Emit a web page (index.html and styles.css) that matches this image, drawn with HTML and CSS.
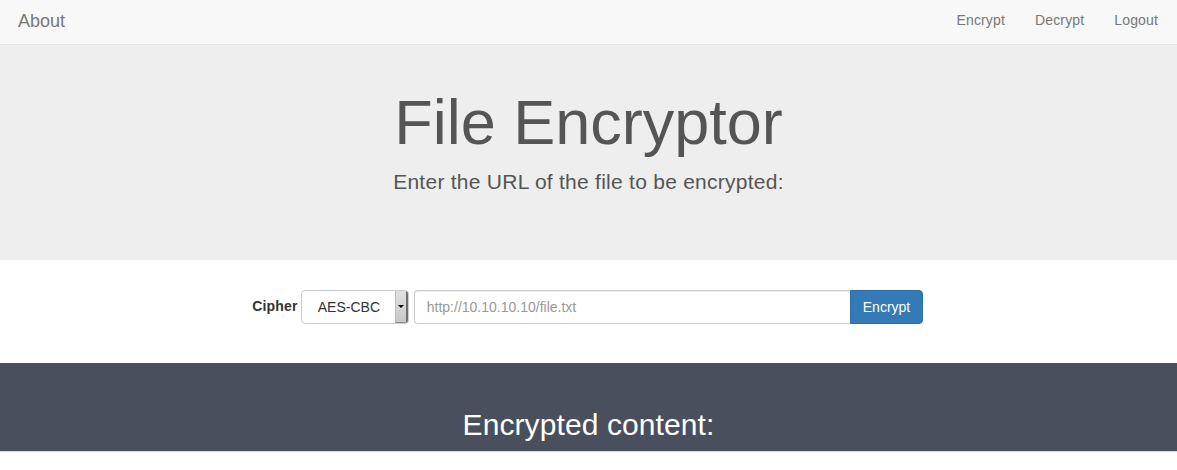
FILE: index.html
```html
<!DOCTYPE html>
<html>
<head>
<meta charset="utf-8">
<title>File Encryptor</title>
<link rel="stylesheet" href="styles.css">
</head>
<body>
<nav class="navbar">
  <a class="brand" href="#">About</a>
  <ul class="nav-links">
    <li><a href="#">Encrypt</a></li>
    <li><a href="#">Decrypt</a></li>
    <li><a href="#">Logout</a></li>
  </ul>
</nav>
<header class="jumbotron">
  <h1 class="title">File Encryptor</h1>
  <p class="lead">Enter the URL of the file to be encrypted:</p>
</header>
<section class="form-section">
  <form class="enc-form">
    <label class="cipher-label">Cipher</label>
    <div class="select">
      <span class="select-value">AES-CBC</span>
      <span class="select-btn"><span class="caret"></span></span>
    </div>
    <div class="input-group">
      <input class="url-input" type="text" placeholder="http://10.10.10.10/file.txt">
      <button class="btn-primary" type="button">Encrypt</button>
    </div>
  </form>
</section>
<section class="result">
  <h2 class="result-title">Encrypted content:</h2>
</section>
</body>
</html>
```
FILE: styles.css
```css
* { box-sizing: border-box; }
html, body { margin: 0; padding: 0; }
body {
  font-family: "Liberation Sans", Arial, sans-serif;
  font-size: 14px;
  line-height: 20px;
  color: #333;
  background: #fff;
}
a { text-decoration: none; }

.navbar {
  height: 45px;
  background: #f8f8f8;
  border-bottom: 1px solid #e7e7e7;
  display: flex;
  justify-content: space-between;
  padding: 0 4px 0 18px;
}
.brand {
  font-size: 18px;
  line-height: 20px;
  color: #777;
  padding-top: 11px;
}
.nav-links {
  list-style: none;
  margin: 0;
  padding: 0;
  display: flex;
}
.nav-links a {
  display: block;
  padding: 10px 15px;
  color: #777;
  font-size: 14px;
  line-height: 20px;
  letter-spacing: 0.15px;
}

.jumbotron {
  background: #eee;
  height: 215px;
  padding-top: 43px;
  text-align: center;
  color: #555;
}
.title {
  margin: 0;
  font-size: 63px;
  line-height: 1.1;
  font-weight: 400;
}
.lead {
  margin: 10px 0 0;
  font-size: 21px;
  line-height: 1.4;
  font-weight: 400;
  letter-spacing: 0.26px;
}

.form-section {
  height: 103px;
  padding-top: 30px;
}
.enc-form {
  display: flex;
  justify-content: center;
  align-items: center;
  margin: 0;
  padding-right: 2px;
}
.cipher-label {
  font-weight: 700;
  margin-right: 3px;
  margin-bottom: 2px;
  letter-spacing: 0.2px;
}
.select {
  width: 108px;
  height: 34px;
  border: 1px solid #ccc;
  border-radius: 4px;
  background: #fff;
  display: flex;
  align-items: stretch;
  margin-right: 5px;
  overflow: hidden;
}
.select-value {
  flex: 1;
  padding-left: 16px;
  line-height: 32px;
  color: #333;
}
.select-btn {
  width: 13px;
  background: linear-gradient(#e0e0e0, #c8c8c8);
  border-right: 2px solid #6e6e6e;
  border-bottom: 1px solid #8a8a8a;
  border-left: 1px solid #bdbdbd;
  display: flex;
  align-items: center;
  justify-content: center;
}
.caret {
  width: 0;
  height: 0;
  border-left: 3px solid transparent;
  border-right: 3px solid transparent;
  border-top: 3px solid #000;
}
.input-group {
  display: flex;
}
.url-input {
  width: 436px;
  height: 34px;
  border: 1px solid #ccc;
  border-right: 0;
  border-radius: 4px 0 0 4px;
  padding: 6px 12px;
  font-family: inherit;
  font-size: 14px;
  color: #555;
  box-shadow: inset 0 1px 1px rgba(0,0,0,.075);
}
.url-input::placeholder { color: #999; }
.btn-primary {
  width: 73px;
  height: 34px;
  border: 1px solid #2e6da4;
  border-radius: 0 4px 4px 0;
  background: #337ab7;
  color: #fff;
  font-family: inherit;
  font-size: 14px;
  padding: 6px 12px;
}

.result {
  height: 89px;
  background: #4a4f5e;
  border-bottom: 1px solid #d6d8dc;
  padding-top: 45px;
  text-align: center;
}
.result-title {
  margin: 0;
  color: #fff;
  font-size: 30px;
  line-height: 1.1;
  font-weight: 400;
  letter-spacing: 0.1px;
}
```
